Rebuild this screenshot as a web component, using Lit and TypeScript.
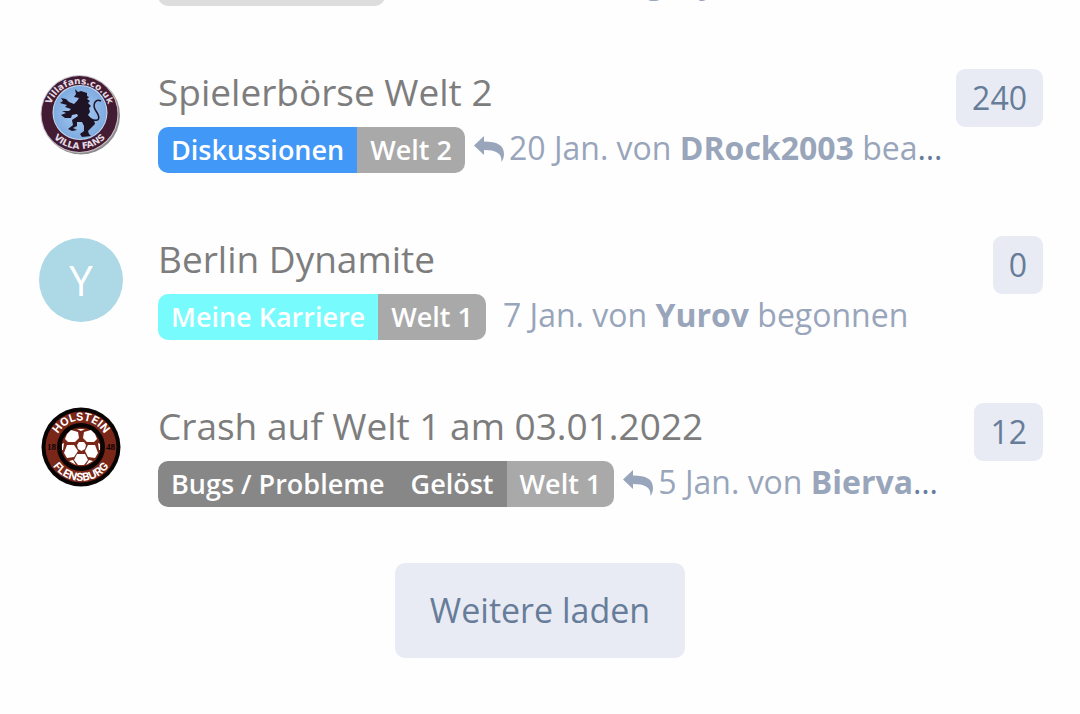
import { LitElement, html, css, svg, nothing } from "lit";
import { customElement, property } from "lit/decorators.js";

interface Tag { label: string; color: string; }
interface Discussion {
  title: string;
  tags: Tag[];
  date: string;
  user: string;
  action: string;
  replied: boolean;
  count: number;
  avatar: "villa" | "holstein" | "letter";
}

const discussions: Discussion[] = [
  { title: "Allgemeines", tags: [{ label: "Transferbörsen", color: "#dddddd" }], date: "2 Feb. von", user: "Gregory", action: "beantwortet", replied: true, count: 3, avatar: "letter" },
  { title: "Spielerbörse Welt 2", tags: [{ label: "Diskussionen", color: "#4298f7" }, { label: "Welt 2", color: "#a9a9a9" }], date: "20 Jan. von", user: "DRock2003", action: "beantwortet", replied: true, count: 240, avatar: "villa" },
  { title: "Berlin Dynamite", tags: [{ label: "Meine Karriere", color: "#78fbfd" }, { label: "Welt 1", color: "#a9a9a9" }], date: "7 Jan. von", user: "Yurov", action: "begonnen", replied: false, count: 0, avatar: "letter" },
  { title: "Crash auf Welt 1 am 03.01.2022", tags: [{ label: "Bugs / Probleme", color: "#878787" }, { label: "Gelöst", color: "#878787" }, { label: "Welt 1", color: "#a9a9a9" }], date: "5 Jan. von", user: "Biervampir", action: "beantwortet", replied: true, count: 12, avatar: "holstein" },
];

const villa = svg`
  <defs>
    <radialGradient id="sky"><stop offset="0" stop-color="#a9cbf3"/><stop offset="1" stop-color="#7fabe0"/></radialGradient>
    <path id="vt" d="M10.500 43 A30 30 0 0 1 70.500 43"/>
    <path id="vb" d="M4.500 42 A36 36 0 0 0 76.500 42"/>
  </defs>
  <circle cx="42" cy="44.500" r="39" fill="#8f8c90"/>
  <circle cx="40.500" cy="43" r="39" fill="#c8c0c8"/>
  <circle cx="40.500" cy="43" r="38" fill="#431c33"/>
  <circle cx="41" cy="41.500" r="27.500" fill="#c8d8ee"/>
  <circle cx="41" cy="41.500" r="26.500" fill="url(#sky)"/>
  <path fill="#1e1426" d="M36 18 L39 21 42 20 45 21 48 22 48 25 50 26 48 28 51 30 49 32 52 35 50 37 51 41 49 44 52 47 55 49 56 53 52 57 49 60 50 63 52 65 43 66 41 63 45 60 45 55 43 51 38 51 38 55 34 57 38 59 33 60 29 58 34 54 33 49 39 45 38 43 33 44 32 47 26 47 22 44 27 42 23 40 30 40 32 38 26 36 28 34 21 32 24 30 22 27 27 28 30 31 35 33 38 30 40 27 35 26 37 23Z"/>
  <path fill="none" stroke="#1e1426" stroke-width="1.500" d="M51 48 C62 52 61 46 57 40 C53 34 56 27 62 30"/>
  <g fill="#e6dde4" font-family="DejaVu Sans" font-weight="bold" font-size="9">
    <text><textPath href="#vt" startOffset="50%" text-anchor="middle">Villafans.co.uk</textPath></text>
    <text><textPath href="#vb" startOffset="50%" text-anchor="middle">VILLA FANS</textPath></text>
  </g>`;

const holstein = svg`
  <defs>
    <path id="ht" d="M15.500 42 A26.500 26.500 0 0 1 68.500 42"/>
    <path id="hb" d="M8 42 A34 34 0 0 0 76 42"/>
  </defs>
  <circle cx="42" cy="42" r="39.500" fill="#080404"/>
  <circle cx="42" cy="42" r="35.500" fill="#7a2619"/>
  <circle cx="42" cy="42" r="24" fill="#080404"/>
  <circle cx="42" cy="42" r="19.500" fill="#7a2619"/>
  <g fill="#fff">
    <path d="M40 37 L45 37 47 40 46 44 42.500 46 39 44 38 40Z"/>
    <path d="M28 29 L32 25 39 27 40 33 36 37 29 37 26 34Z"/>
    <path d="M45 27 L52 25 56 29 58 34 55 37 48 37 44 33Z"/>
    <path d="M28 40 L35 40 39 46 35 52 28 53 25 48Z"/>
    <path d="M49 40 L56 40 59 48 56 53 49 52 46 46Z"/>
    <path d="M38 49 L46 49 49 55 45 60 39 60 35 55Z"/>
    <path d="M23 39 L25 38 24 45 23 45Z M61 39 L59 38 60 45 61 45Z M30 56 L34 55 37 60Z M54 56 L50 55 47 60Z M38 24 L46 24 42 26Z"/>
  </g>
  <g fill="#fff" font-family="Inter" font-weight="700" font-size="11">
    <text><textPath href="#ht" startOffset="50%" text-anchor="middle">HOLSTEIN</textPath></text>
    <text><textPath href="#hb" startOffset="50%" text-anchor="middle">FLENSBURG</textPath></text>
  </g>
  <g fill="#080404" font-family="Liberation Serif" font-weight="bold" font-size="9">
    <text x="8" y="45">18</text><text x="67" y="45">48</text>
  </g>`;

@customElement("discussion-row")
class DiscussionRow extends LitElement {
  @property({ attribute: false }) item!: Discussion;

  static styles = css`
    :host { display: block; height: 167px; flex: none; }
    .row { display: flex; align-items: flex-start; padding: 0 37px 0 39px; }
    .avatar { width: 84px; height: 84px; margin-top: 2px; margin-right: 35px; flex: none; border-radius: 50%; }
    .letter { background: #add8e6; color: #fff; font-size: 42px; line-height: 84px; text-align: center; }
    .main { flex: 1; min-width: 0; text-decoration: none; color: #667c99; }
    h3 { margin: 0; font-size: 37px; font-weight: 400; line-height: 46px; color: #7d7d7d; white-space: nowrap; overflow: hidden; text-overflow: ellipsis; }
    .info { display: flex; align-items: center; margin-top: 12px; }
    .tags { display: flex; flex: none; border-radius: 10px; overflow: hidden; margin-right: 9px; }
    .tag { padding: 0 13px; font-size: 27px; line-height: 46px; font-weight: 600; color: #fff; }
    .line { flex: 1; min-width: 0; font-size: 32px; line-height: 42px; margin-bottom: 4px; white-space: nowrap; overflow: hidden; text-overflow: ellipsis; }
    .reply { width: 30px; height: 26px; margin-right: 5px; fill: #98a5ba; vertical-align: -2px; }
    .meta { color: #98a5ba; }
    .started { margin-left: 8px; }
    .side { display: flex; justify-content: flex-end; width: 98px; flex: none; }
    .count { border: 0; border-radius: 9px; background: #e8ebf3; color: #667c99; font: inherit; font-size: 32px; line-height: 58px; padding: 0 16px; }
  `;

  render() {
    const d = this.item;
    return html`<article class="row">
      ${d.avatar === "letter"
        ? html`<div class="avatar letter">${d.user[0]}</div>`
        : html`<svg class="avatar" viewBox="0 0 84 84" aria-hidden="true">${d.avatar === "villa" ? villa : holstein}</svg>`}
      <a class="main" href="#">
        <h3>${d.title}</h3>
        <div class="info"><span class="tags">${d.tags.map((t) => html`<span class="tag" style="background:${t.color}">${t.label}</span>`)}</span><span class="line">${d.replied
          ? html`<svg class="reply" viewBox="0 0 30 26" aria-hidden="true"><path d="M0 9.500 L10 0 V5.500 C23 5.500 30 9 30 18 C30 21 29 24 27.500 26 C28 17 22 14 10 14 V19Z"/></svg>`
          : nothing}<span class="meta ${d.replied ? "" : "started"}">${d.date} <strong>${d.user}</strong> ${d.action}</span></span></div>
      </a>
      <div class="side"><button class="count">${d.count}</button></div>
    </article>`;
  }
}

@customElement("app-root")
class AppRoot extends LitElement {
  static styles = css`
    :host { display: block; height: 100vh; overflow: hidden; background: #fefefe; font-family: "Open Sans", "Noto Sans", sans-serif; }
    .list { display: flex; flex-direction: column; margin-top: -98px; }
    .more { align-self: center; margin-top: -7px; border: 0; border-radius: 10px; background: #e8ebf3; color: #667c99; font: inherit; font-size: 34px; line-height: 95px; padding: 0 35px; }
  `;

  render() {
    return html`<main class="list">
      ${discussions.map((d) => html`<discussion-row .item=${d}></discussion-row>`)}
      <button class="more">Weitere laden</button>
    </main>`;
  }
}
